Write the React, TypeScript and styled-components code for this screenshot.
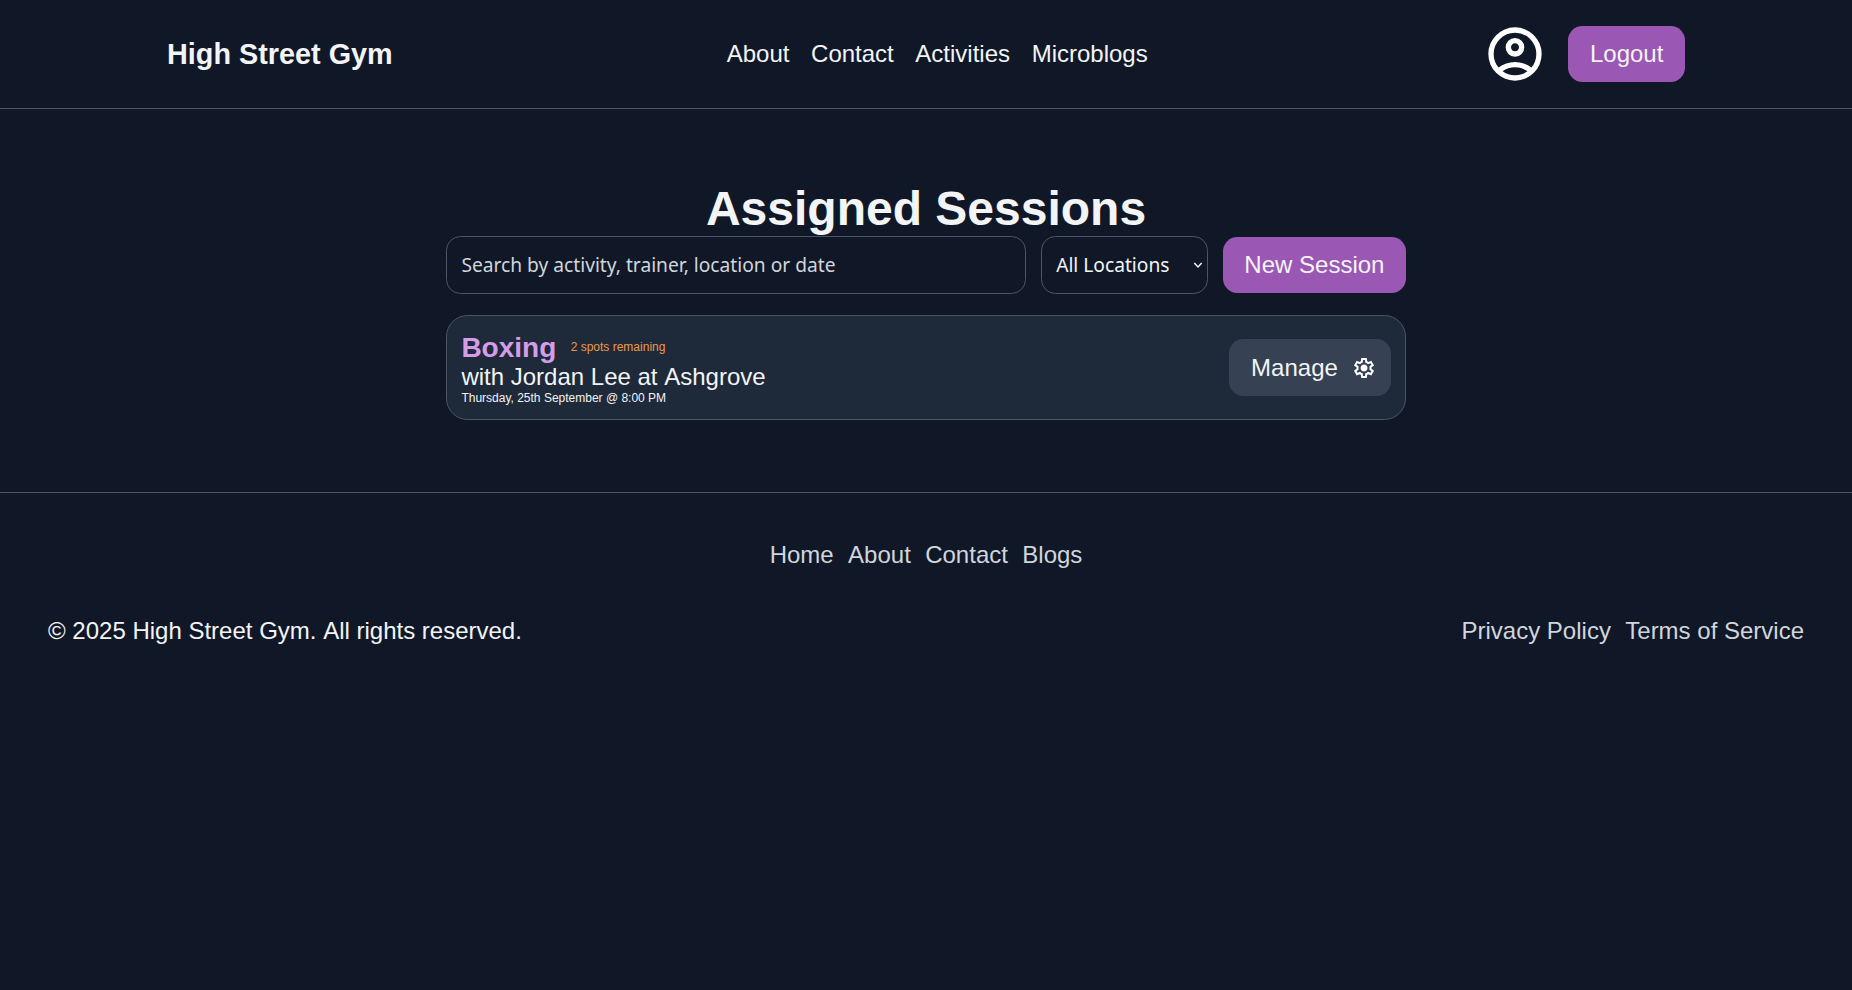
import styled, { createGlobalStyle } from "styled-components";

const GlobalStyle = createGlobalStyle`
  * { box-sizing: border-box; margin: 0; padding: 0; }
  body {
    background: #101828;
    color: #f3f4f6;
    font: 24px/1.15 "Liberation Sans", Arial, sans-serif;
  }
`;

const Header = styled.header`
  display: flex;
  justify-content: space-around;
  align-items: center;
  height: 109px;
  border-bottom: 1px solid #4a5565;
`;

const Logo = styled.h2`
  font-size: 28.8px;
  line-height: 34px;
`;

const LinkRow = styled.nav<{ $gap: number; $muted?: boolean }>`
  display: flex;
  align-items: center;
  gap: ${(p) => p.$gap}px;
  color: ${(p) => (p.$muted ? "#d1d5dc" : "#f3f4f6")};
`;

const Link = styled.a`
  color: inherit;
  text-decoration: none;
`;

const Account = styled.div`
  display: flex;
  align-items: center;
  gap: 21.6px;
  padding-left: 1px;
  color: #fff;
`;

const Button = styled.button<{ $secondary?: boolean }>`
  display: flex;
  align-items: center;
  gap: 14.4px;
  height: ${(p) => (p.$secondary ? 57 : 56)}px;
  flex: none;
  padding: ${(p) => (p.$secondary ? "0 14.4px 0 22.4px" : "0 21.6px")};
  border: 0;
  border-radius: 14.4px;
  background: ${(p) => (p.$secondary ? "#364153" : "#9b57b4")};
  color: #f3f4f6;
  font: inherit;

  svg { color: #fff; }
`;

const Main = styled.main`
  display: flex;
  flex-direction: column;
  width: 960px;
  margin: 0 auto;
  padding: 72px 0;
`;

const Title = styled.h1`
  font-size: 48px;
  line-height: 55px;
  text-align: center;
`;

const Filters = styled.div`
  display: flex;
  align-items: center;
  gap: 15px;
`;

const SearchInput = styled.input`
  flex: 1;
  min-width: 0;
  height: 58px;
  padding: 0 14.4px 1px;
  border: 1px solid #4a5565;
  border-radius: 14.4px;
  background: transparent;
  color: #f3f4f6;
  font: 19.2px "Noto Sans", sans-serif;

  &::placeholder { color: #d1d5dc; opacity: 1; }
`;

const SelectBox = styled.div`
  display: grid;
  grid-template-columns: 1fr;
  align-items: center;
  width: 167px;

  > * { grid-area: 1 / 1; }

  svg {
    justify-self: end;
    margin-right: 5px;
    pointer-events: none;
  }
`;

const LocationSelect = styled.select`
  appearance: none;
  height: 58px;
  padding: 0 14.4px 1px;
  border: 1px solid #4a5565;
  border-radius: 14.4px;
  background: transparent;
  color: #f3f4f6;
  font: 19.2px "Noto Sans", sans-serif;

  option { background: #101828; }
`;

const SessionCard = styled.article`
  display: flex;
  align-items: center;
  justify-content: space-between;
  height: 105px;
  margin-top: 21px;
  padding: 0 14.4px;
  border: 1px solid #4a5565;
  border-radius: 21.6px;
  background: #1e2939;
`;

const SessionHeading = styled.div`
  display: flex;
  align-items: center;
  gap: 14.4px;
`;

const Activity = styled.h2`
  padding-top: 2px;
  color: #d59ce8;
  font-size: 28px;
  line-height: 30px;
`;

const Spots = styled.span`
  color: #ed9a48;
  font-size: 12px;
  line-height: 14px;
`;

const Trainer = styled.p`
  line-height: 27px;
  font-kerning: none;
`;

const SessionTime = styled.p`
  margin-bottom: -1px;
  padding-top: 1px;
  font-size: 12px;
  line-height: 15px;
`;

const Footer = styled.footer`
  border-top: 1px solid #4a5565;
  padding: 48px;
`;

const FooterNav = styled.div`
  display: flex;
  justify-content: center;
`;

const FooterBottom = styled.div`
  display: flex;
  justify-content: space-between;
  margin-top: 48px;
`;

const Copyright = styled.p`
  font-kerning: none;
`;

const AccountIcon = () => (
  <svg width="64" height="64" viewBox="0 -960 960 960" fill="currentColor">
    <path d="M234-276q51-39 114-61.5T480-360q69 0 132 22.5T726-276q35-41 54.5-93T800-480q0-133-93.5-226.5T480-800q-133 0-226.5 93.5T160-480q0 59 19.5 111t54.5 93Zm246-164q-59 0-99.5-40.5T340-580q0-59 40.5-99.5T480-720q59 0 99.5 40.5T620-580q0 59-40.5 99.5T480-440Zm0 360q-83 0-156-31.5T197-197q-54-54-85.5-127T80-480q0-83 31.5-156T197-763q54-54 127-85.5T480-880q83 0 156 31.5T763-763q54 54 85.5 127T880-480q0 83-31.5 156T763-197q-54 54-127 85.5T480-80Zm0-80q53 0 100-15.5t86-44.5q-39-29-86-44.5T480-280q-53 0-100 15.5T294-220q39 29 86 44.5T480-160Zm0-360q26 0 43-17t17-43q0-26-17-43t-43-17q-26 0-43 17t-17 43q0 26 17 43t43 17Z" />
  </svg>
);

const SettingsIcon = () => (
  <svg width="24" height="24" viewBox="0 -960 960 960" fill="currentColor">
    <path d="m370-80-16-128q-13-5-24.5-12T307-235l-119 50L78-375l103-78q-1-7-1-13.5v-27q0-6.500 1-13.500L78-585l110-190 119 50q11-8 23-15t24-12l16-128h220l16 128q13 5 24.500 12t22.500 15l119-50 110 190-103 78q1 7 1 13.500v27q0 6.500-2 13.500l103 78-110 190-118-50q-11 8-23 15t-24 12L590-80H370Zm70-80h79l14-106q31-8 57.500-23.500T639-327l99 41 39-68-86-65q5-14 7-29.500t2-31.500q0-16-2-31.500t-7-29.500l86-65-39-68-99 42q-22-23-48.500-38.500T533-694l-13-106h-79l-14 106q-31 8-57.500 23.500T321-633l-99-41-39 68 86 64q-5 15-7 30t-2 32q0 16 2 31t7 30l-86 65 39 68 99-42q22 23 48.500 38.500T427-266l13 106Zm42-180q58 0 99-41t41-99q0-58-41-99t-99-41q-59 0-99.500 41T342-480q0 58 40.500 99t99.500 41Z" />
  </svg>
);

const Chevron = () => (
  <svg width="10" height="8" viewBox="0 0 10 8" fill="none" stroke="#f3f4f6" strokeWidth="1.5">
    <path d="M1.300 2 5 6 8.700 2" />
  </svg>
);

export default function App() {
  return (
    <>
      <GlobalStyle />
      <Header>
        <Logo>High Street Gym</Logo>
        <LinkRow $gap={21.6}>
          {["About", "Contact", "Activities", "Microblogs"].map((label) => (
            <Link key={label}>{label}</Link>
          ))}
        </LinkRow>
        <Account>
          <AccountIcon />
          <Button>Logout</Button>
        </Account>
      </Header>
      <Main>
        <Title>Assigned Sessions</Title>
        <Filters>
          <SearchInput placeholder="Search by activity, trainer, location or date" />
          <SelectBox>
            <LocationSelect>
              <option>All Locations</option>
            </LocationSelect>
            <Chevron />
          </SelectBox>
          <Button>New Session</Button>
        </Filters>
        <SessionCard>
          <div>
            <SessionHeading>
              <Activity>Boxing</Activity>
              <Spots>2 spots remaining</Spots>
            </SessionHeading>
            <Trainer>with Jordan Lee at Ashgrove</Trainer>
            <SessionTime>Thursday, 25th September @ 8:00 PM</SessionTime>
          </div>
          <Button $secondary>
            Manage
            <SettingsIcon />
          </Button>
        </SessionCard>
      </Main>
      <Footer>
        <FooterNav>
          <LinkRow $gap={14.4} $muted>
            {["Home", "About", "Contact", "Blogs"].map((label) => (
              <Link key={label}>{label}</Link>
            ))}
          </LinkRow>
        </FooterNav>
        <FooterBottom>
          <Copyright>© 2025 High Street Gym. All rights reserved.</Copyright>
          <LinkRow $gap={14.4} $muted>
            <Link>Privacy Policy</Link>
            <Link>Terms of Service</Link>
          </LinkRow>
        </FooterBottom>
      </Footer>
    </>
  );
}
